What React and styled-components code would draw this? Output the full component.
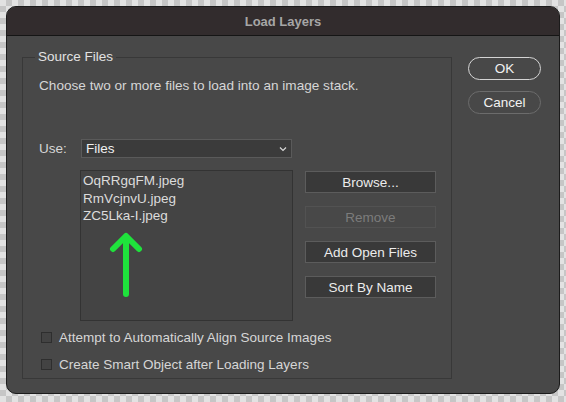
import React from 'react';
import styled, { createGlobalStyle } from 'styled-components';

const GlobalStyle = createGlobalStyle`
    html, body {
        margin: 0;
        padding: 0;
    }
    body {
        width: 566px;
        height: 402px;
        overflow: hidden;
        font-family: "Liberation Sans", Arial, sans-serif;
        background-color: #e2e2e2;
        background-image:
            linear-gradient(45deg, #c6c6c6 25%, transparent 25%, transparent 75%, #c6c6c6 75%),
            linear-gradient(45deg, #c6c6c6 25%, transparent 25%, transparent 75%, #c6c6c6 75%);
        background-size: 12px 12px;
        background-position: 0 0, 6px 6px;
    }
`;

const Page = styled.div`
    width: 566px;
    height: 402px;
    box-sizing: border-box;
    padding: 6px;
`;

const Window = styled.div`
    width: 554px;
    height: 388px;
    box-sizing: border-box;
    border: 1px solid #1b1b1b;
    border-radius: 10px;
    overflow: hidden;
    background: #484848;
    display: flex;
    flex-direction: column;
`;

const TitleBar = styled.div`
    height: 28px;
    flex-shrink: 0;
    background: #322c2d;
    border-bottom: 1px solid #151515;
    display: flex;
    align-items: center;
    justify-content: center;
    color: #a6a6a6;
    font-size: 13px;
    font-weight: 700;
`;

const Body = styled.div`
    display: flex;
    align-items: flex-start;
    padding: 13px 0 0 15px;
    gap: 16px;
`;

const Group = styled.fieldset`
    margin: 0;
    padding: 0 0 6px 16px;
    width: 430px;
    box-sizing: border-box;
    border: 1px solid #383838;
    min-inline-size: 0;
`;

const Legend = styled.legend`
    margin-left: -4px;
    padding: 0 3px;
    line-height: 16px;
    font-size: 13.5px;
    color: #e2e2e2;
`;

const Description = styled.div`
    margin-top: 13px;
    line-height: 16px;
    font-size: 13.6px;
    color: #d6d6d6;
`;

const UseRow = styled.div`
    margin-top: 45px;
    display: flex;
    align-items: center;
`;

const UseLabel = styled.span`
    width: 42px;
    font-size: 13.5px;
    color: #d6d6d6;
`;

const Select = styled.div`
    width: 211px;
    height: 19px;
    box-sizing: border-box;
    border: 1px solid #5a5a5a;
    background: #3b3b3b;
    display: flex;
    align-items: center;
    justify-content: space-between;
    padding: 0 4px 0 4px;
    font-size: 13.5px;
    color: #f0f0f0;
`;

const FilesRow = styled.div`
    margin-top: 12px;
    margin-left: 41px;
    display: flex;
    align-items: flex-start;
    gap: 12px;
`;

const FileList = styled.div`
    position: relative;
    width: 213px;
    height: 151px;
    box-sizing: border-box;
    border: 1px solid #333333;
    background: #444444;
    padding: 1px 0 0 2px;
`;

const FileItem = styled.div`
    line-height: 17.5px;
    font-size: 13.5px;
    color: #dcdcdc;
`;

const Arrow = styled.svg`
    position: absolute;
    left: 28px;
    top: 60px;
`;

const ButtonColumn = styled.div`
    margin-top: 1px;
    display: flex;
    flex-direction: column;
    gap: 13px;
`;

const Button = styled.div`
    width: 131px;
    height: 22px;
    box-sizing: border-box;
    border: 1px solid ${props => (props.disabled ? '#525252' : '#5c5c5c')};
    background: ${props => (props.disabled ? '#484848' : '#393939')};
    display: flex;
    align-items: center;
    justify-content: center;
    font-size: 13.5px;
    color: ${props => (props.disabled ? '#7c7c7c' : '#ececec')};
`;

const CheckList = styled.div`
    margin-top: 8px;
    display: flex;
    flex-direction: column;
    gap: 11px;
`;

const CheckRow = styled.label`
    display: flex;
    align-items: center;
    height: 16px;
    gap: 7px;
    padding-left: 2px;
    font-size: 13.5px;
    color: #d6d6d6;
`;

const Box = styled.span`
    width: 11px;
    height: 11px;
    box-sizing: border-box;
    border: 1px solid #2e2e2e;
    background: #434343;
`;

const SideColumn = styled.div`
    margin-top: 8px;
    display: flex;
    flex-direction: column;
    gap: 11px;
`;

const PillButton = styled.div`
    width: 73px;
    height: 23px;
    box-sizing: border-box;
    border-radius: 12px;
    border: ${props => (props.primary ? '1.5px solid #d4d4d4' : '1px solid #6c6c6c')};
    display: flex;
    align-items: center;
    justify-content: center;
    font-size: 13.5px;
    color: #f2f2f2;
`;

const Chevron = () => (
    <svg width="8" height="6" viewBox="0 0 8 6">
        <path d="M1 1.5 L4 4.5 L7 1.5" fill="none" stroke="#d8d8d8" strokeWidth="1.2" />
    </svg>
);

export default () => {
    return (
        <Page>
            <GlobalStyle />
            <Window>
                <TitleBar>Load Layers</TitleBar>
                <Body>
                    <Group>
                        <Legend>Source Files</Legend>
                        <Description>Choose two or more files to load into an image stack.</Description>
                        <UseRow>
                            <UseLabel>Use:</UseLabel>
                            <Select>
                                Files
                                <Chevron />
                            </Select>
                        </UseRow>
                        <FilesRow>
                            <FileList>
                                <FileItem>OqRRgqFM.jpeg</FileItem>
                                <FileItem>RmVcjnvU.jpeg</FileItem>
                                <FileItem>ZC5Lka-I.jpeg</FileItem>
                                <Arrow width="36" height="68" viewBox="0 0 36 68">
                                    <g fill="none" stroke="#1fe23c" strokeWidth="6" strokeLinecap="round" strokeLinejoin="round">
                                        <path d="M17 63 L17 6" />
                                        <path d="M4 18 L17 5 L30 18" />
                                    </g>
                                </Arrow>
                            </FileList>
                            <ButtonColumn>
                                <Button>Browse...</Button>
                                <Button disabled>Remove</Button>
                                <Button>Add Open Files</Button>
                                <Button>Sort By Name</Button>
                            </ButtonColumn>
                        </FilesRow>
                        <CheckList>
                            <CheckRow>
                                <Box />
                                Attempt to Automatically Align Source Images
                            </CheckRow>
                            <CheckRow>
                                <Box />
                                Create Smart Object after Loading Layers
                            </CheckRow>
                        </CheckList>
                    </Group>
                    <SideColumn>
                        <PillButton primary>OK</PillButton>
                        <PillButton>Cancel</PillButton>
                    </SideColumn>
                </Body>
            </Window>
        </Page>
    );
};
